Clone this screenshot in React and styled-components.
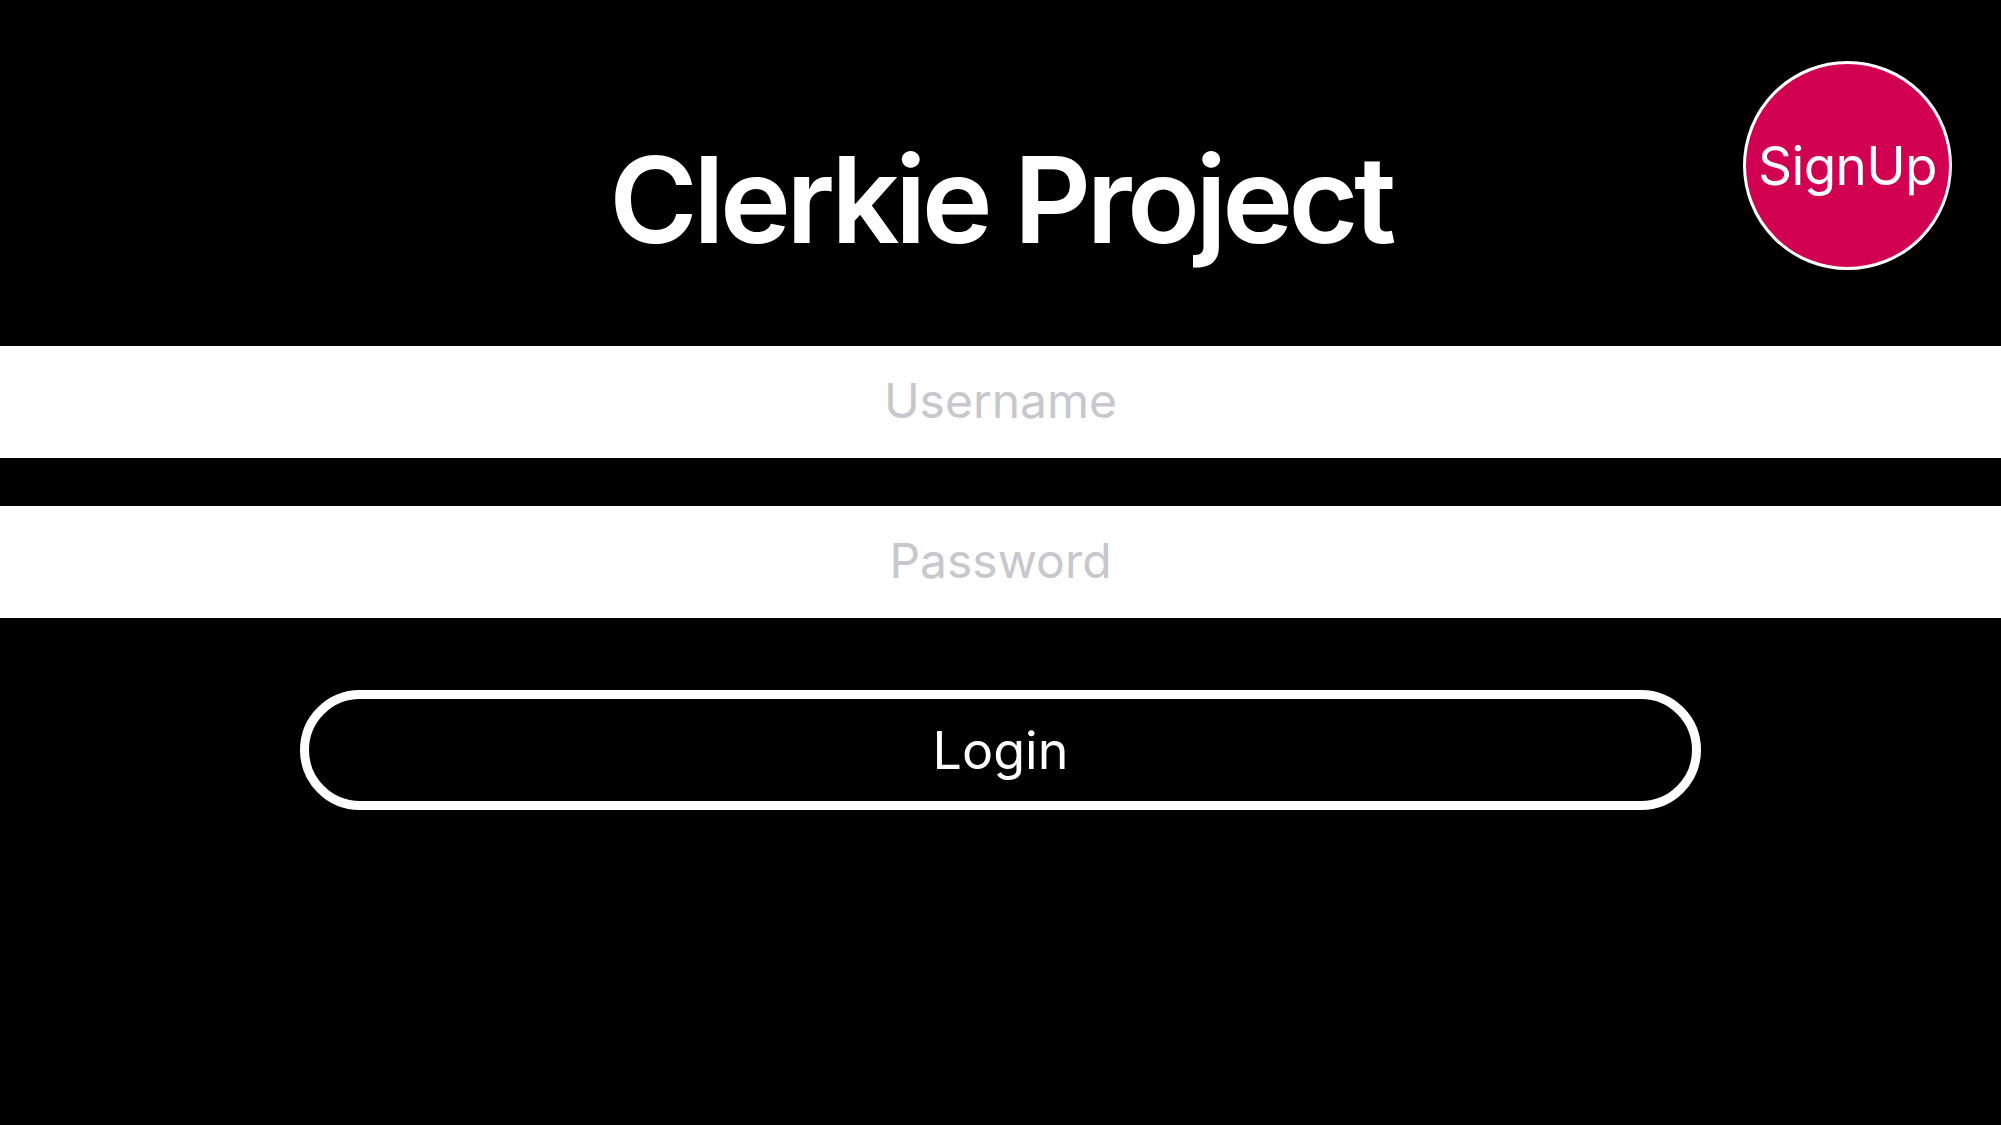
import React, { useState } from "react";
import styled, { createGlobalStyle } from "styled-components";

const GlobalStyle = createGlobalStyle`
  html, body {
    margin: 0;
    padding: 0;
    background-color: #000;
  }
  body {
    font-family: Inter, "Noto Sans", sans-serif;
  }
`;

const App = () => {
  const [username, setUsername] = useState("");
  const [password, setPassword] = useState("");

  return (
    <Container>
      <GlobalStyle />
      <Header>
        <Title>Clerkie Project</Title>
        <SignUpButton>SignUp</SignUpButton>
      </Header>
      <Form>
        <Input
          placeholder="Username"
          value={username}
          onChange={(event) => setUsername(event.target.value)}
        />
        <Input
          type="password"
          placeholder="Password"
          value={password}
          onChange={(event) => setPassword(event.target.value)}
        />
      </Form>
      <LoginButton>Login</LoginButton>
    </Container>
  );
};

const Container = styled.div`
  width: 100%;
  min-height: 1125px;
  background-color: #000;
  display: flex;
  flex-direction: column;
  align-items: center;
`;

const Header = styled.div`
  position: relative;
  width: 100%;
  height: 346px;
  box-sizing: border-box;
  padding-top: 140px;
  display: flex;
  justify-content: center;
  align-items: flex-start;
`;

const Title = styled.h1`
  margin: 0;
  color: #fff;
  font-family: Inter, sans-serif;
  font-weight: 600;
  font-size: 120px;
  line-height: 1;
  letter-spacing: -4.6px;
`;

const SignUpButton = styled.button`
  position: absolute;
  top: 61px;
  right: 49px;
  width: 209px;
  height: 209px;
  border-radius: 50%;
  border: 3px solid #fff;
  background-color: #d10050;
  color: #fff;
  font-family: Inter, sans-serif;
  font-size: 53px;
  letter-spacing: -0.6px;
  padding: 0;
  cursor: pointer;
`;

const Form = styled.div`
  width: 100%;
  display: flex;
  flex-direction: column;
  gap: 48px;
`;

const Input = styled.input`
  width: 100%;
  height: 112px;
  box-sizing: border-box;
  border: none;
  background-color: #fff;
  text-align: center;
  font-family: Inter, sans-serif;
  font-size: 48px;
  color: #000;
  padding: 0 0 4px;
  &::placeholder {
    color: #c7c7cd;
    opacity: 1;
  }
  &:focus {
    outline-width: 0;
  }
`;

const LoginButton = styled.button`
  margin-top: 72px;
  width: 1401px;
  height: 120px;
  box-sizing: border-box;
  border: 9px solid #fff;
  border-radius: 60px;
  background-color: transparent;
  color: #fff;
  font-family: Inter, sans-serif;
  font-size: 52px;
  cursor: pointer;
`;

export default App;
